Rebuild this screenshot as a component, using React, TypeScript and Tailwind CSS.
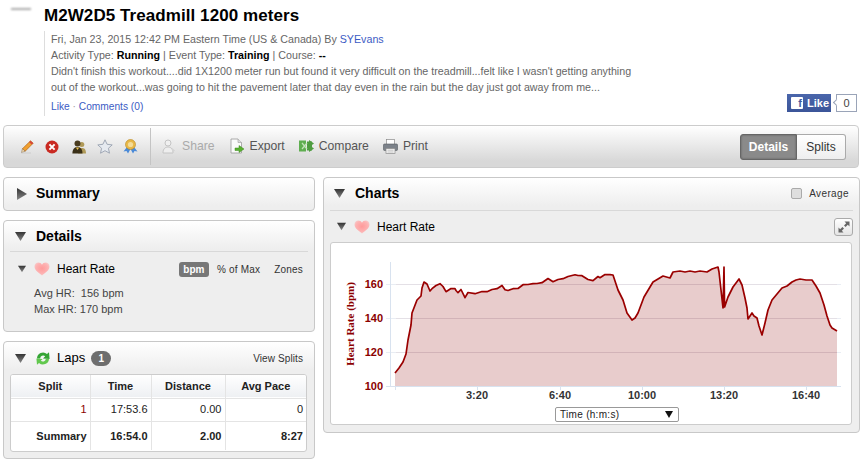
import React from "react";

const Tri = ({ s = 12, right = false }: { s?: number; right?: boolean }) => (
  <svg width={s} height={s} viewBox="0 0 12 12" className="shrink-0">
    <defs>
      <linearGradient id="trg" x1="0" y1="0" x2="0" y2="1">
        <stop offset="0" stopColor="#333" />
        <stop offset="1" stopColor="#888" />
      </linearGradient>
    </defs>
    {right ? <path d="M1 0 L11 6 L1 12 Z" fill="url(#trg)" /> : <path d="M0 1 H12 L6 11 Z" fill="url(#trg)" />}
  </svg>
);

const Heart = () => (
  <svg width="16" height="14" viewBox="0 0 16 14" className="shrink-0">
    <defs>
      <radialGradient id="hg" cx="0.5" cy="0.45" r="0.6">
        <stop offset="0" stopColor="#ff9a9a" />
        <stop offset="0.7" stopColor="#fdb4b4" />
        <stop offset="1" stopColor="#f6d0d0" />
      </radialGradient>
    </defs>
    <path d="M8 13.5 C5 11 0.5 8.5 0.5 4.5 C0.5 2 2.4 0.6 4.3 0.6 C6 0.6 7.3 1.5 8 2.8 C8.7 1.5 10 0.6 11.7 0.6 C13.6 0.6 15.5 2 15.5 4.5 C15.5 8.5 11 11 8 13.5 Z" fill="url(#hg)" />
  </svg>
);

const Pencil = () => (
  <svg width="13" height="14" viewBox="0 0 13 14">
    <path d="M9.5 0.8 L12.2 3.2 L4.2 11.2 L1.4 8.8 Z" fill="#f0a030" stroke="#a85a10" strokeWidth="0.6" />
    <path d="M9.5 0.8 L12.2 3.2 L10.8 4.6 L8.1 2.2 Z" fill="#d8453a" />
    <path d="M1.4 8.8 L4.2 11.2 L0.5 12.6 Z" fill="#f3dcb6" stroke="#6b4a20" strokeWidth="0.4" />
    <path d="M0.5 13 H10" stroke="#c8c8c8" strokeWidth="0.8" />
  </svg>
);

const RedX = () => (
  <svg width="14" height="14" viewBox="0 0 14 14">
    <circle cx="7" cy="7" r="6.5" fill="#c92a22" />
    <path d="M4.4 4.4 L9.6 9.6 M9.6 4.4 L4.4 9.6" stroke="#fff" strokeWidth="2" />
  </svg>
);

const People = () => (
  <svg width="14" height="14" viewBox="0 0 14 14">
    <circle cx="9.8" cy="4.6" r="2.5" fill="#b09a58" />
    <path d="M6 13.5 C6 9 8 8 9.8 8 C12 8 14 9 14 13.5 Z" fill="#b09a58" />
    <circle cx="5.5" cy="3.4" r="3" fill="#4a3c20" />
    <path d="M0.4 13.5 C0.4 8.5 3 7 5.5 7 C8 7 10.5 8.5 10.5 13.5 Z" fill="#3a3018" />
    <path d="M3.8 7.5 L5.5 10 L7.2 7.5 Z" fill="#e8c050" />
  </svg>
);

const Star = () => (
  <svg width="16" height="15" viewBox="0 0 16 15">
    <path d="M8 0.8 L10.1 5.3 L15.2 5.9 L11.4 9.3 L12.5 14.2 L8 11.7 L3.5 14.2 L4.6 9.3 L0.8 5.9 L5.9 5.3 Z" fill="#e6eaf0" stroke="#98a2b0" strokeWidth="0.9" strokeLinejoin="round" />
  </svg>
);

const Ribbon = () => (
  <svg width="15" height="15" viewBox="0 0 15 15">
    <path d="M4 8 L0.5 12.5 L3.5 12 L5 14.5 L7.5 10 L10 14.5 L11.5 12 L14.5 12.5 L11 8 Z" fill="#4a8ad8" />
    <circle cx="7.5" cy="5.5" r="5" fill="#e8b848" stroke="#b88820" strokeWidth="0.6" />
    <circle cx="7.5" cy="5.5" r="2.6" fill="#f4dc98" />
  </svg>
);

const ShareIcon = () => (
  <svg width="14" height="15" viewBox="0 0 14 15">
    <circle cx="6" cy="4" r="3" fill="#f0f0f0" stroke="#c4c4c4" />
    <path d="M1 14 C1 9.5 3.5 8 6 8 C8.5 8 11 9.5 11 14 Z" fill="#eee" stroke="#c4c4c4" />
    <path d="M10 9 L13 11.5 L10 14 Z" fill="#d4d4d4" />
  </svg>
);

const ExportIcon = () => (
  <svg width="15" height="16" viewBox="0 0 15 16">
    <path d="M1 1 H8 L11.5 4.5 V15 H1 Z" fill="#fafafa" stroke="#9a9a9a" strokeWidth="0.8" />
    <path d="M8 1 V4.5 H11.5" fill="#ddd" stroke="#9a9a9a" strokeWidth="0.6" />
    <path d="M5 10 H9 V7.5 L14 11 L9 14.5 V12.5 H5 Z" fill="#58b030" stroke="#3c8a1c" strokeWidth="0.5" />
  </svg>
);

const CompareIcon = () => (
  <svg width="15" height="12" viewBox="0 0 15 12">
    <rect x="0" y="0.5" width="7" height="11" fill="#5fae50" />
    <rect x="8" y="1.5" width="5" height="9" fill="#4f9c40" />
    <path d="M10 0 L15 3.5 L10 7 Z" fill="#4f9c40" />
    <path d="M10 5 L15 8.5 L10 12 Z" fill="#4f9c40" />
    <path d="M3 3 L8 9 M8 3 L3 9" stroke="#c4e4ba" strokeWidth="1.2" />
  </svg>
);

const PrintIcon = () => (
  <svg width="15" height="15" viewBox="0 0 15 15">
    <rect x="3.5" y="0.5" width="8" height="5" fill="#fff" stroke="#8a8a8a" strokeWidth="0.7" />
    <rect x="0.5" y="5" width="14" height="6.5" rx="1" fill="#7c828a" stroke="#565a60" strokeWidth="0.6" />
    <rect x="3" y="9.5" width="9" height="5" fill="#f4f4f4" stroke="#8a8a8a" strokeWidth="0.7" />
    <path d="M4.5 11.2 H10.5 M4.5 13 H10.5" stroke="#aaa" strokeWidth="0.6" />
  </svg>
);

const LapsIcon = () => (
  <svg width="14" height="15" viewBox="0 0 14 15">
    <path d="M1 7.5 A6 6 0 0 1 11 3 L13 1.2 L13.6 8 L7 7.4 L9.2 5.2 A3 3 0 0 0 4.2 7.5 Z" fill="#35a535" />
    <path d="M13 8 A6 6 0 0 1 3 12 L1 13.8 L0.4 7.6 L6.6 8 L4.8 9.8 A3 3 0 0 0 9.8 8 Z" fill="#62c84e" />
  </svg>
);

const ExpandIcon = () => (
  <svg width="12" height="12" viewBox="0 0 12 12">
    <path d="M6.5 0.5 H11.5 V5.5 L9.8 3.8 L7.6 6 L6 4.4 L8.2 2.2 Z" fill="#666" />
    <path d="M5.5 11.5 H0.5 V6.5 L2.2 8.2 L4.4 6 L6 7.6 L3.8 9.8 Z" fill="#666" />
  </svg>
);

const raw: [number, number][] = [
  [395, 373], [399, 368], [403, 362], [406, 354], [408, 340], [411, 325], [412, 313], [417, 300], [421, 296], [422, 288], [424, 282],
  [427, 284], [430, 291], [432, 288], [436, 286], [440, 283], [443, 287], [446, 291], [451, 289], [455, 288], [456, 291], [458, 292], [461, 290],
  [465, 297], [468, 293], [475, 293], [482, 292], [487, 291], [492, 290], [497, 288], [502, 286], [505, 289], [508, 291], [513, 288], [518, 289],
  [523, 284], [528, 285], [533, 283], [537, 284], [542, 282], [548, 279], [553, 281], [558, 280], [563, 278], [568, 277], [575, 274], [578, 276], [582, 275],
  [588, 280], [593, 280], [598, 277], [600, 277], [605, 275], [610, 274], [613, 275], [618, 290], [623, 300], [627, 313], [632, 320], [635, 318], [638, 313],
  [644, 297], [653, 282], [658, 279], [663, 276], [670, 278], [673, 272], [680, 271], [685, 272], [690, 271], [695, 272], [700, 271], [707, 272],
  [712, 269], [718, 267], [719, 272], [721, 290], [723, 308], [724, 267], [724.6, 307], [728, 297], [733, 287], [739, 279], [742, 285],
  [745, 298], [747, 308], [748, 319], [752, 313], [754, 316], [757, 318], [759, 326], [762, 335], [765, 323], [768, 310], [772, 300], [777, 294], [782, 288],
  [787, 286], [792, 282], [796, 280], [800, 279], [806, 280], [812, 280], [816, 286], [820, 293], [824, 305], [827, 316], [830, 325], [832, 328], [837, 331],
];

const line = raw
  .map(([x, y], i) => {
    const j = x > 430 && x < 615 && x !== 613 ? (i % 2 ? 0.7 : -0.5) : 0;
    return `${x},${y + j}`;
  })
  .join(" ");
const area = `395,386 ${line} 837,386`;

const Chart = () => (
  <svg viewBox="330 242 522 183" className="w-full h-full block">
    {[284, 318, 352].map((y) => (
      <line key={y} x1="386" x2="841" y1={y + 0.5} y2={y + 0.5} stroke="#e9edf3" />
    ))}
    <polygon points={area} fill="#8b0000" fillOpacity="0.2" />
    {[284, 318, 352].map((y) => (
      <line key={y} x1="396" x2="837" y1={y + 0.5} y2={y + 0.5} stroke="#8b0000" strokeOpacity="0.05" />
    ))}
    <line x1="390.5" x2="390.5" y1="262" y2="387" stroke="#d8e2ef" />
    <line x1="386" x2="841" y1="386.5" y2="386.5" stroke="#d8e2ef" />
    {[395, 477, 560, 642, 724, 806].map((x) => (
      <line key={x} x1={x + 0.5} x2={x + 0.5} y1="387" y2="390" stroke="#d8e2ef" />
    ))}
    <polyline points={line} fill="none" stroke="#9a0000" strokeWidth="1.7" strokeLinejoin="round" />
    {[["160", 288], ["140", 322], ["120", 356], ["100", 390]].map(([t, y]) => (
      <text key={t} x="383" y={y} textAnchor="end" fontFamily="'Liberation Sans',sans-serif" fontWeight="700" fontSize="11" fill="#8b0000">
        {t}
      </text>
    ))}
    {[["3:20", 477], ["6:40", 560], ["10:00", 642], ["13:20", 724], ["16:40", 806]].map(([t, x]) => (
      <text key={t} x={x} y="399" textAnchor="middle" fontFamily="'Liberation Sans',sans-serif" fontWeight="700" fontSize="11" fill="#333">
        {t}
      </text>
    ))}
    <text x="0" y="0" transform="translate(354 324) rotate(-90)" textAnchor="middle" fontFamily="'Liberation Serif',serif" fontWeight="700" fontSize="11" fill="#8b0000">
      Heart Rate (bpm)
    </text>
  </svg>
);

const Card = ({ className, children }: { className: string; children: React.ReactNode }) => (
  <div className={`rounded-[4px] border border-[#c8c8c8] bg-[#eeeeee] bg-[linear-gradient(#ffffff,#eeeeee_28px)] ${className}`}>{children}</div>
);

export default function App() {
  return (
    <div className="relative w-[868px] h-[463px] overflow-hidden bg-white font-['Liberation_Sans',Arial,sans-serif] text-[#333]">
      {/* header */}
      <div className="relative h-[125px] pl-[44px]">
        <div className="absolute left-[11px] top-[8px] w-[20px] h-[2px] bg-[#aaa] blur-[1px]" />
        <h1 className="h-[31px] pt-[5px] text-[17px] leading-[22px] font-bold text-black tracking-[0.07px]">M2W2D5 Treadmill 1200 meters</h1>
        <div className="flex items-end h-[85px]">
          <div className="h-[85px] w-[743px] border-l border-[#dddddd] pl-[6px] text-[10.7px] leading-[16px] text-[#666]">
            <div>
              Fri, Jan 23, 2015 12:42 PM Eastern Time (US &amp; Canada) By <span className="text-[#3b5bc4]">SYEvans</span>
            </div>
            <div>
              Activity Type: <b className="text-black">Running</b> | Event Type: <b className="text-black">Training</b> | Course: <b className="text-black">--</b>
            </div>
            <div>Didn't finish this workout....did 1X1200 meter run but found it very difficult on the treadmill...felt like I wasn't getting anything</div>
            <div>out of the workout...was going to hit the pavement later that day even in the rain but the day just got away from me...</div>
            <div className="mt-[5px] text-[10.2px] leading-[14px] text-[#3b5bc4]">
              Like <span className="text-[#999]">·</span> Comments (0)
            </div>
          </div>
          <div className="flex items-center mb-[4px]">
            <div className="flex items-center h-[18px] w-[44px] bg-[linear-gradient(#4a66ab,#3b5599)] pl-[4px] gap-[4px] text-white text-[11px] font-bold">
              <span className="flex items-center justify-end w-[12px] h-[12px] rounded-[1px] bg-white text-[#3f5a9e] text-[11px] leading-[12px] font-bold pr-[1px]">f</span>
              Like
            </div>
            <div className="relative flex items-center justify-center ml-[5px] w-[21px] h-[18px] border border-[#9aa4b8] bg-white text-[11px] text-[#444]">
              <span className="absolute -left-[3px] top-[5px] w-[5px] h-[5px] rotate-45 border-l border-b border-[#9aa4b8] bg-white" />
              0
            </div>
          </div>
        </div>
      </div>

      {/* toolbar */}
      <div className="mx-[3px] w-[856px] h-[43px] rounded-[4px] border border-[#cccccc] bg-[linear-gradient(#ffffff,#d8d8d8_85%)] flex items-center text-[12.2px] text-[#555]">
        <div className="flex items-center pl-[17px] w-[147px] h-[37px] border-r border-[#c4c4c4]">
          <span className="w-[24px] flex"><Pencil /></span>
          <span className="w-[27px] flex"><RedX /></span>
          <span className="w-[25px] flex"><People /></span>
          <span className="w-[26px] flex"><Star /></span>
          <Ribbon />
        </div>
        <div className="flex items-center pl-[11px] gap-[6px] text-[#aaa]"><ShareIcon />Share</div>
        <div className="flex items-center pl-[15px] gap-[5px]"><ExportIcon />Export</div>
        <div className="flex items-center pl-[14px] gap-[5px]"><CompareIcon />Compare</div>
        <div className="flex items-center pl-[14px] gap-[5px]"><PrintIcon />Print</div>
        <div className="ml-auto mr-[12px] flex h-[26px] text-[12px]">
          <div className="w-[57px] flex items-center justify-center rounded-l-[3px] border border-[#666] bg-[#8a8a8a] font-bold text-white shadow-[inset_0_0_2px_#555]">Details</div>
          <div className="w-[49px] flex items-center justify-center rounded-r-[3px] border border-l-0 border-[#aaa] bg-[linear-gradient(#ffffff,#eeeeee)] text-[#333]">Splits</div>
        </div>
      </div>

      {/* columns */}
      <div className="flex gap-[8px] pl-[3px] pt-[9px] items-start">
        <div className="w-[312px] flex flex-col gap-[9px]">
          <Card className="h-[34px] flex items-center pl-[12px] pb-[1px]">
            <Tri right s={12} />
            <span className="ml-[8px] text-[14px] font-bold text-black">Summary</span>
          </Card>

          <Card className="h-[112px] px-[6px]">
            <div className="h-[31px] flex items-center pl-[5px] border-b border-[#d8d8d8]">
              <Tri s={11} />
              <span className="ml-[10px] text-[14px] font-bold text-black">Details</span>
            </div>
            <div className="flex items-center h-[33px] pt-[1px] pl-[8px] pr-[5px]">
              <Tri s={8} />
              <span className="ml-[8px] flex"><Heart /></span>
              <span className="ml-[7px] text-[12px] text-black">Heart Rate</span>
              <span className="ml-auto w-[30px] h-[15px] rounded-[3px] bg-[#777] text-white text-[10px] font-bold flex items-center justify-center">bpm</span>
              <span className="ml-[8px] text-[10px] text-[#333] tracking-[0.2px]">% of Max</span>
              <span className="ml-[14px] text-[10px] text-[#333] tracking-[0.2px]">Zones</span>
            </div>
            <div className="pl-[24px] text-[11px] leading-[16px] text-[#444]">
              <div>Avg HR:&nbsp;&nbsp;156 bpm</div>
              <div>Max HR:&nbsp;170 bpm</div>
            </div>
          </Card>

          <Card className="h-[118px] pl-[6px] pr-[7px]">
            <div className="flex items-center h-[32px] pl-[5px] pr-[4px]">
              <Tri s={11} />
              <span className="ml-[10px] flex"><LapsIcon /></span>
              <span className="ml-[7px] text-[13px] font-normal text-black">Laps</span>
              <span className="ml-[6px] w-[20px] h-[15px] rounded-[8px] bg-[#6e6e6e] text-white text-[10px] font-bold flex items-center justify-center">1</span>
              <span className="ml-auto text-[10px] text-[#333] tracking-[0.1px]">View Splits</span>
            </div>
            <div className="rounded-[3px] border border-[#cccccc] bg-white h-[78px] overflow-hidden">
              <table className="w-full table-fixed border-collapse text-[11px] text-[#222]">
                <colgroup>
                  <col className="w-[79px]" /><col className="w-[61px]" /><col className="w-[74px]" /><col className="w-[81px]" />
                </colgroup>
                <thead>
                  <tr className="h-[23px] bg-[linear-gradient(#ffffff,#eef0f3)] border-b border-[#e4e4e4] font-bold">
                    <th className="border-r border-[#e4e4e4] font-bold text-center">Split</th>
                    <th className="border-r border-[#e4e4e4] font-bold text-center">Time</th>
                    <th className="border-r border-[#e4e4e4] font-bold text-center">Distance</th>
                    <th className="font-bold text-center">Avg Pace</th>
                  </tr>
                </thead>
                <tbody>
                  <tr className="h-[23px] border-b border-[#e4e4e4] text-right">
                    <td className="border-r border-[#e4e4e4] pr-[3px] text-[#8b0000]">1</td>
                    <td className="border-r border-[#e4e4e4] pr-[3px]">17:53.6</td>
                    <td className="border-r border-[#e4e4e4] pr-[3px]">0.00</td>
                    <td className="pr-[3px]">0</td>
                  </tr>
                  <tr className="h-[29px] text-right font-bold">
                    <td className="border-r border-[#e4e4e4] pr-[3px]">Summary</td>
                    <td className="border-r border-[#e4e4e4] pr-[3px]">16:54.0</td>
                    <td className="border-r border-[#e4e4e4] pr-[3px]">2.00</td>
                    <td className="pr-[3px]">8:27</td>
                  </tr>
                </tbody>
              </table>
            </div>
          </Card>
        </div>

        <Card className="w-[537px] h-[256px] px-[6px] flex flex-col">
          <div className="h-[33px] shrink-0 flex items-center pl-[4px] pr-[4px] pb-[2px] border-b border-[#d8d8d8]">
            <Tri s={11} />
            <span className="ml-[10px] text-[14px] font-bold text-black">Charts</span>
            <span className="ml-auto w-[11px] h-[11px] rounded-[2px] border border-[#aaa] bg-[#dedede]" />
            <span className="ml-[7px] text-[10px] text-[#333] tracking-[0.4px]">Average</span>
          </div>
          <div className="h-[31px] shrink-0 flex items-center pl-[7px]">
            <Tri s={9} />
            <span className="ml-[8px] flex"><Heart /></span>
            <span className="ml-[7px] text-[12px] text-black">Heart Rate</span>
            <span className="ml-auto w-[19px] h-[18px] rounded-[3px] border border-[#aaa] bg-[linear-gradient(#ffffff,#e4e4e4)] flex items-center justify-center"><ExpandIcon /></span>
          </div>
          <div className="relative w-[522px] h-[183px] rounded-[3px] border border-[#cccccc] bg-white">
            <div className="absolute -left-px -top-px w-[522px] h-[183px]"><Chart /></div>
            <div className="absolute left-[224px] top-[164px] w-[124px] h-[15px] border border-[#999] rounded-[2px] bg-white flex items-center pl-[4px] text-[10px] text-[#222] tracking-[0.3px]">
              Time (h:m:s)
              <svg width="8" height="7" viewBox="0 0 8 7" className="absolute right-[5px] top-[3px]"><path d="M0 0 H8 L4 7 Z" fill="#111" /></svg>
            </div>
          </div>
        </Card>
      </div>
    </div>
  );
}
